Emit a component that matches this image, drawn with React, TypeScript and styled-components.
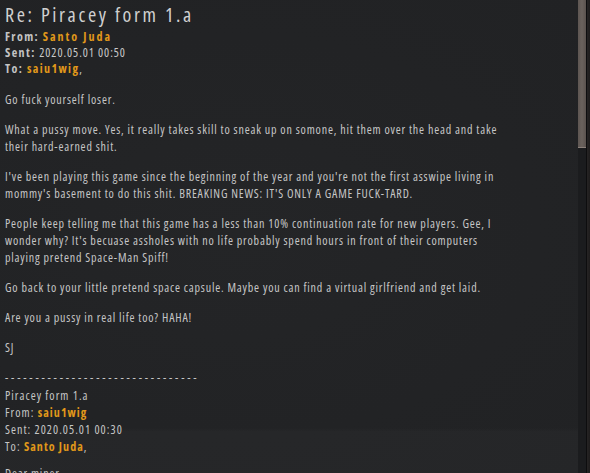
import React from 'react';
import styled, { createGlobalStyle } from 'styled-components';

const GlobalStyle = createGlobalStyle`
  html, body {
    margin: 0;
    padding: 0;
    background: #222325;
  }
`;

const Window = styled.div`
  display: flex;
  width: 590px;
  height: 473px;
  overflow: hidden;
  background:
    linear-gradient(180deg, rgba(255,255,255,0) 0, rgba(255,255,255,0) 428px, rgba(255,255,255,0.02) 432px),
    radial-gradient(ellipse at 40% 50%, #242527 0%, #222325 60%, #212224 100%);
  font-family: "Open Sans", "DejaVu Sans Condensed", sans-serif;
  font-stretch: condensed;
  color: #c6c6c6;
`;

const Content = styled.div`
  flex: 1;
  padding: 3px 6px 0 5px;
  overflow: hidden;
`;

const Title = styled.h1`
  margin: 0;
  font-size: 20px;
  font-weight: 400;
  letter-spacing: 2.6px;
  line-height: 24px;
  color: #d0d0d0;
`;

const HeaderBlock = styled.div`
  margin-top: 2px;
  margin-bottom: 14px;
`;

const HeaderLine = styled.div`
  font-size: 12px;
  line-height: 16px;
  letter-spacing: 1.4px;
  font-weight: 700;
  white-space: nowrap;
  color: #c4c4c4;
`;

const Plain = styled.span`
  font-weight: 400;
  letter-spacing: 0.95px;
  color: #cacaca;
`;

const Name = styled.span<{ $wide?: boolean }>`
  color: #e0981a;
  font-weight: 700;
  letter-spacing: ${p => (p.$wide ? '2px' : 'inherit')};
`;

const Para = styled.p<{ $top?: number }>`
  margin: ${p => p.$top ?? 0}px 0 13px 0;
  font-size: 12px;
  line-height: 17px;
  letter-spacing: 0.82px;
  white-space: nowrap;
`;

const Divider = styled.div`
  font-size: 12px;
  line-height: 17px;
  letter-spacing: 2.8px;
  white-space: nowrap;
`;

const QuoteLine = styled.div`
  font-size: 12px;
  line-height: 17px;
  letter-spacing: 1.05px;
  white-space: nowrap;
`;

const ScrollTrack = styled.div`
  width: 8px;
  background: #1b1c1e;
  display: flex;
  flex-direction: column;
`;

const ScrollThumb = styled.div`
  height: 147px;
  background: linear-gradient(90deg, #5e5652 0%, #6a625d 50%, #5a524e 100%);
  border-bottom: 1px solid #8a807a;
`;

const Edge = styled.div`
  width: 4px;
  background: linear-gradient(90deg, #0d0d0e 0, #0d0d0e 1px, #262424 1px, #1e1c1c 100%);
`;

export default function App() {
  return (
    <>
      <GlobalStyle />
      <Window>
        <Content>
          <Title>Re: Piracey form 1.a</Title>
          <HeaderBlock>
            <HeaderLine>
              From: <Name $wide>Santo Juda</Name>
            </HeaderLine>
            <HeaderLine>
              Sent: <Plain>2020.05.01 00:50</Plain>
            </HeaderLine>
            <HeaderLine>
              To: <Name>saiu1wig</Name>
              <Plain>,</Plain>
            </HeaderLine>
          </HeaderBlock>

          <Para>Go fuck yourself loser.</Para>
          <Para>
            What a pussy move. Yes, it really takes skill to sneak up on somone, hit them over the head and take
            <br />
            their hard-earned shit.
          </Para>
          <Para>
            I've been playing this game since the beginning of the year and you're not the first asswipe living in
            <br />
            mommy's basement to do this shit. BREAKING NEWS: IT'S ONLY A GAME FUCK-TARD.
          </Para>
          <Para>
            People keep telling me that this game has a less than 10% continuation rate for new players. Gee, I
            <br />
            wonder why? It's becuase assholes with no life probably spend hours in front of their computers
            <br />
            playing pretend Space-Man Spiff!
          </Para>
          <Para>
            Go back to your little pretend space capsule. Maybe you can find a virtual girlfriend and get laid.
          </Para>
          <Para>Are you a pussy in real life too? HAHA!</Para>
          <Para>SJ</Para>

          <Divider>--------------------------------</Divider>
          <QuoteLine style={{ marginTop: 1 }}>Piracey form 1.a</QuoteLine>
          <QuoteLine>
            From: <Name>saiu1wig</Name>
          </QuoteLine>
          <QuoteLine>Sent: 2020.05.01 00:30</QuoteLine>
          <QuoteLine>
            To: <Name>Santo Juda</Name>,
          </QuoteLine>
          <Para $top={10}>Dear miner,</Para>
        </Content>
        <ScrollTrack>
          <ScrollThumb />
        </ScrollTrack>
        <Edge />
      </Window>
    </>
  );
}
